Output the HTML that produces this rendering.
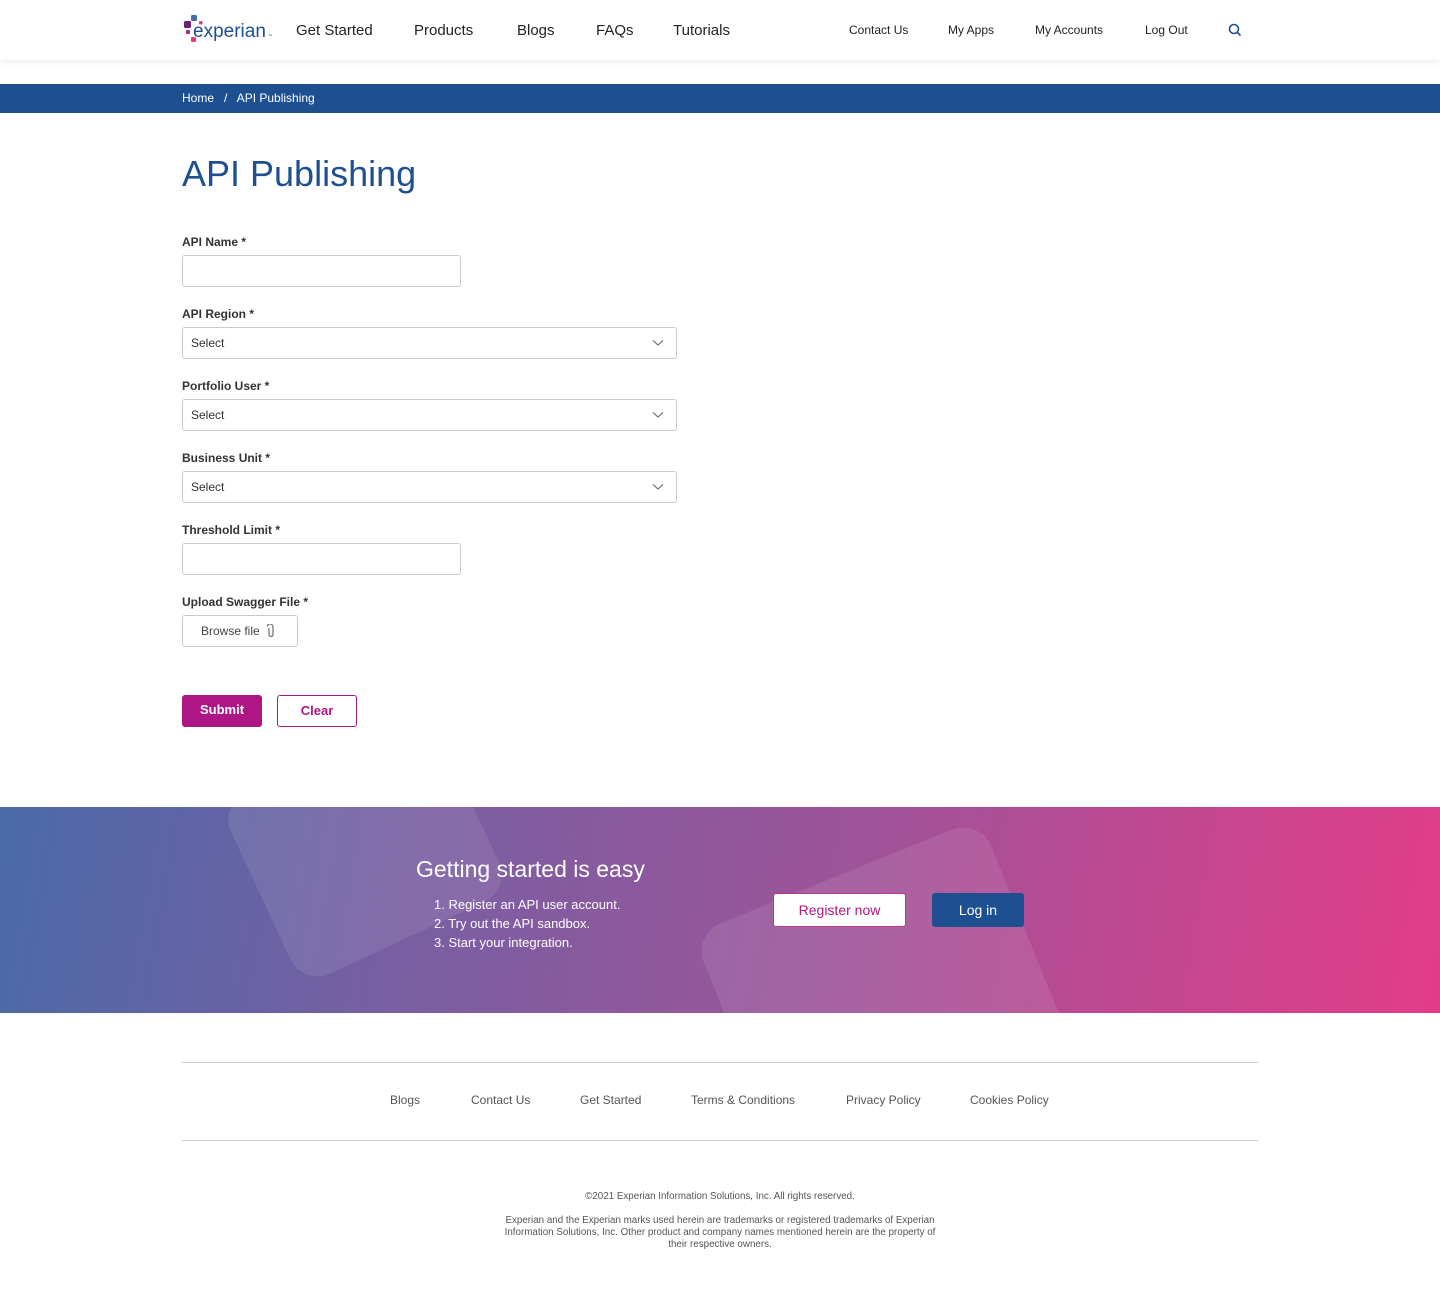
<!DOCTYPE html>
<html><head><meta charset="utf-8">
<style>
*{box-sizing:border-box;margin:0;padding:0}
body{width:1440px;height:1291px;font-family:"Liberation Sans",Arial,sans-serif;background:#fff;color:#333;position:relative;overflow:hidden}
.hdr{position:absolute;top:0;left:0;width:1440px;height:60px;background:#fff;box-shadow:0 2px 6px rgba(0,0,0,0.08)}
.hdr a{position:absolute;top:22px;color:#222;text-decoration:none}
.big{font-size:15px}
.sm{font-size:12px;top:23px!important}
.crumb{position:absolute;top:84px;left:0;width:1440px;height:29px;background:#1d4f91;color:#fff;font-size:12px;line-height:29px;padding-left:182px}
h1{position:absolute;top:153px;left:182px;font-size:36px;font-weight:normal;color:#1d4f91}
.lbl{position:absolute;left:182px;font-size:12px;font-weight:bold;color:#333}
.inp{position:absolute;left:182px;height:32px;border:1px solid #c9c9c9;border-radius:3px;background:#fff;font-size:12px;line-height:30px;padding-left:8px;color:#333}
.sel{width:495px}
.sel svg{position:absolute;right:12px;top:11px}
.btn{position:absolute;top:695px;height:32px;border-radius:3px;font-size:13px;font-weight:bold;text-align:center;line-height:30px}
.band{position:absolute;top:807px;left:0;width:1440px;height:206px;background:linear-gradient(100deg,#4b6aa8 0%,#7a5ea2 30%,#a05398 60%,#e33c89 100%);overflow:hidden}
.shape{position:absolute;background:rgba(255,255,255,0.09);border-radius:30px}
.foot a{position:absolute;top:1093px;font-size:12px;color:#555}
.line{position:absolute;left:182px;width:1076px;height:1px;background:#ccc}
.cp{position:absolute;left:0;width:1440px;text-align:center;font-size:9.8px;color:#555;line-height:12px}
</style></head><body>
<div class="hdr">
 <svg style="position:absolute;left:183px;top:15px" width="92" height="30" viewBox="0 0 92 30">
  <rect x="8" y="0" width="6" height="6" rx="1.5" fill="#426da9"/>
  <rect x="1" y="6" width="7" height="7" rx="1.5" fill="#6d2077"/>
  <rect x="16" y="6" width="3.5" height="3.5" rx="1" fill="#e63888"/>
  <rect x="3" y="15" width="4" height="4" rx="1" fill="#b12384"/>
  <rect x="8" y="22" width="5" height="5" rx="1.2" fill="#e63888"/>
  <text x="10" y="22" font-family="Liberation Sans,sans-serif" font-size="19" fill="#1d4f91">experian</text>
  <text x="85" y="22" font-size="4" fill="#1d4f91">™</text>
 </svg>
 <a class="big" style="left:296px">Get Started</a>
 <a class="big" style="left:414px">Products</a>
 <a class="big" style="left:517px">Blogs</a>
 <a class="big" style="left:596px">FAQs</a>
 <a class="big" style="left:673px">Tutorials</a>
 <a class="sm" style="left:849px">Contact Us</a>
 <a class="sm" style="left:948px">My Apps</a>
 <a class="sm" style="left:1035px">My Accounts</a>
 <a class="sm" style="left:1145px">Log Out</a>
 <svg style="position:absolute;left:1228px;top:23px" width="14" height="14" viewBox="0 0 14 14"><circle cx="6" cy="6" r="4.5" fill="none" stroke="#1d4f91" stroke-width="1.6"/><path d="M9.3 9.3L12.5 12.5" stroke="#1d4f91" stroke-width="1.6"/></svg>
</div>
<div class="crumb">Home &nbsp;&nbsp;/&nbsp;&nbsp; API Publishing</div>
<h1>API Publishing</h1>

<div class="lbl" style="top:235px">API Name *</div>
<div class="inp" style="top:255px;width:279px"></div>
<div class="lbl" style="top:307px">API Region *</div>
<div class="inp sel" style="top:327px">Select<svg width="12" height="8" viewBox="0 0 12 8"><path d="M1 1.5L6 6L11 1.5" fill="none" stroke="#666" stroke-width="1.1"/></svg></div>
<div class="lbl" style="top:379px">Portfolio User *</div>
<div class="inp sel" style="top:399px">Select<svg width="12" height="8" viewBox="0 0 12 8"><path d="M1 1.5L6 6L11 1.5" fill="none" stroke="#666" stroke-width="1.1"/></svg></div>
<div class="lbl" style="top:451px">Business Unit *</div>
<div class="inp sel" style="top:471px">Select<svg width="12" height="8" viewBox="0 0 12 8"><path d="M1 1.5L6 6L11 1.5" fill="none" stroke="#666" stroke-width="1.1"/></svg></div>
<div class="lbl" style="top:523px">Threshold Limit *</div>
<div class="inp" style="top:543px;width:279px"></div>
<div class="lbl" style="top:595px">Upload Swagger File *</div>
<div class="inp" style="top:615px;width:116px;padding-left:18px;color:#444">Browse file
 <svg style="position:absolute;left:84px;top:8px" width="8" height="14" viewBox="0 0 8 14"><path d="M2 4V10.5a2 2 0 0 0 4 0V3a3 3 0 0 0-6 0" fill="none" stroke="#777" stroke-width="1.3"/></svg></div>

<div class="btn" style="left:182px;width:80px;background:#af1685;color:#fff">Submit</div>
<div class="btn" style="left:277px;width:80px;border:1px solid #af1685;color:#af1685">Clear</div>

<div class="band">
 <div class="shape" style="left:250px;top:-60px;width:230px;height:200px;transform:rotate(-25deg)"></div>
 <div class="shape" style="left:730px;top:60px;width:310px;height:260px;transform:rotate(-22deg)"></div>
 <div style="position:absolute;left:416px;top:49px;font-size:23px;color:#fff">Getting started is easy</div>
 <div style="position:absolute;left:434px;top:88px;font-size:13px;color:#fff;line-height:19px">1. Register an API user account.<br>2. Try out the API sandbox.<br>3. Start your integration.</div>
 <div style="position:absolute;left:773px;top:86px;width:133px;height:34px;background:#fff;border:1px solid #c2338a;border-radius:3px;color:#af1685;font-size:14px;text-align:center;line-height:32px">Register now</div>
 <div style="position:absolute;left:932px;top:86px;width:92px;height:34px;background:#1d4f91;border-radius:3px;color:#fff;font-size:14px;text-align:center;line-height:34px">Log in</div>
</div>

<div class="line" style="top:1062px"></div>
<div class="foot">
 <a style="left:390px">Blogs</a><a style="left:471px">Contact Us</a><a style="left:580px">Get Started</a><a style="left:691px">Terms &amp; Conditions</a><a style="left:846px">Privacy Policy</a><a style="left:970px">Cookies Policy</a>
</div>
<div class="line" style="top:1140px"></div>
<div class="cp" style="top:1191px">©2021 Experian Information Solutions, Inc. All rights reserved.</div>
<div class="cp" style="top:1215px">Experian and the Experian marks used herein are trademarks or registered trademarks of Experian<br>Information Solutions, Inc. Other product and company names mentioned herein are the property of<br>their respective owners.</div>
</body></html>
